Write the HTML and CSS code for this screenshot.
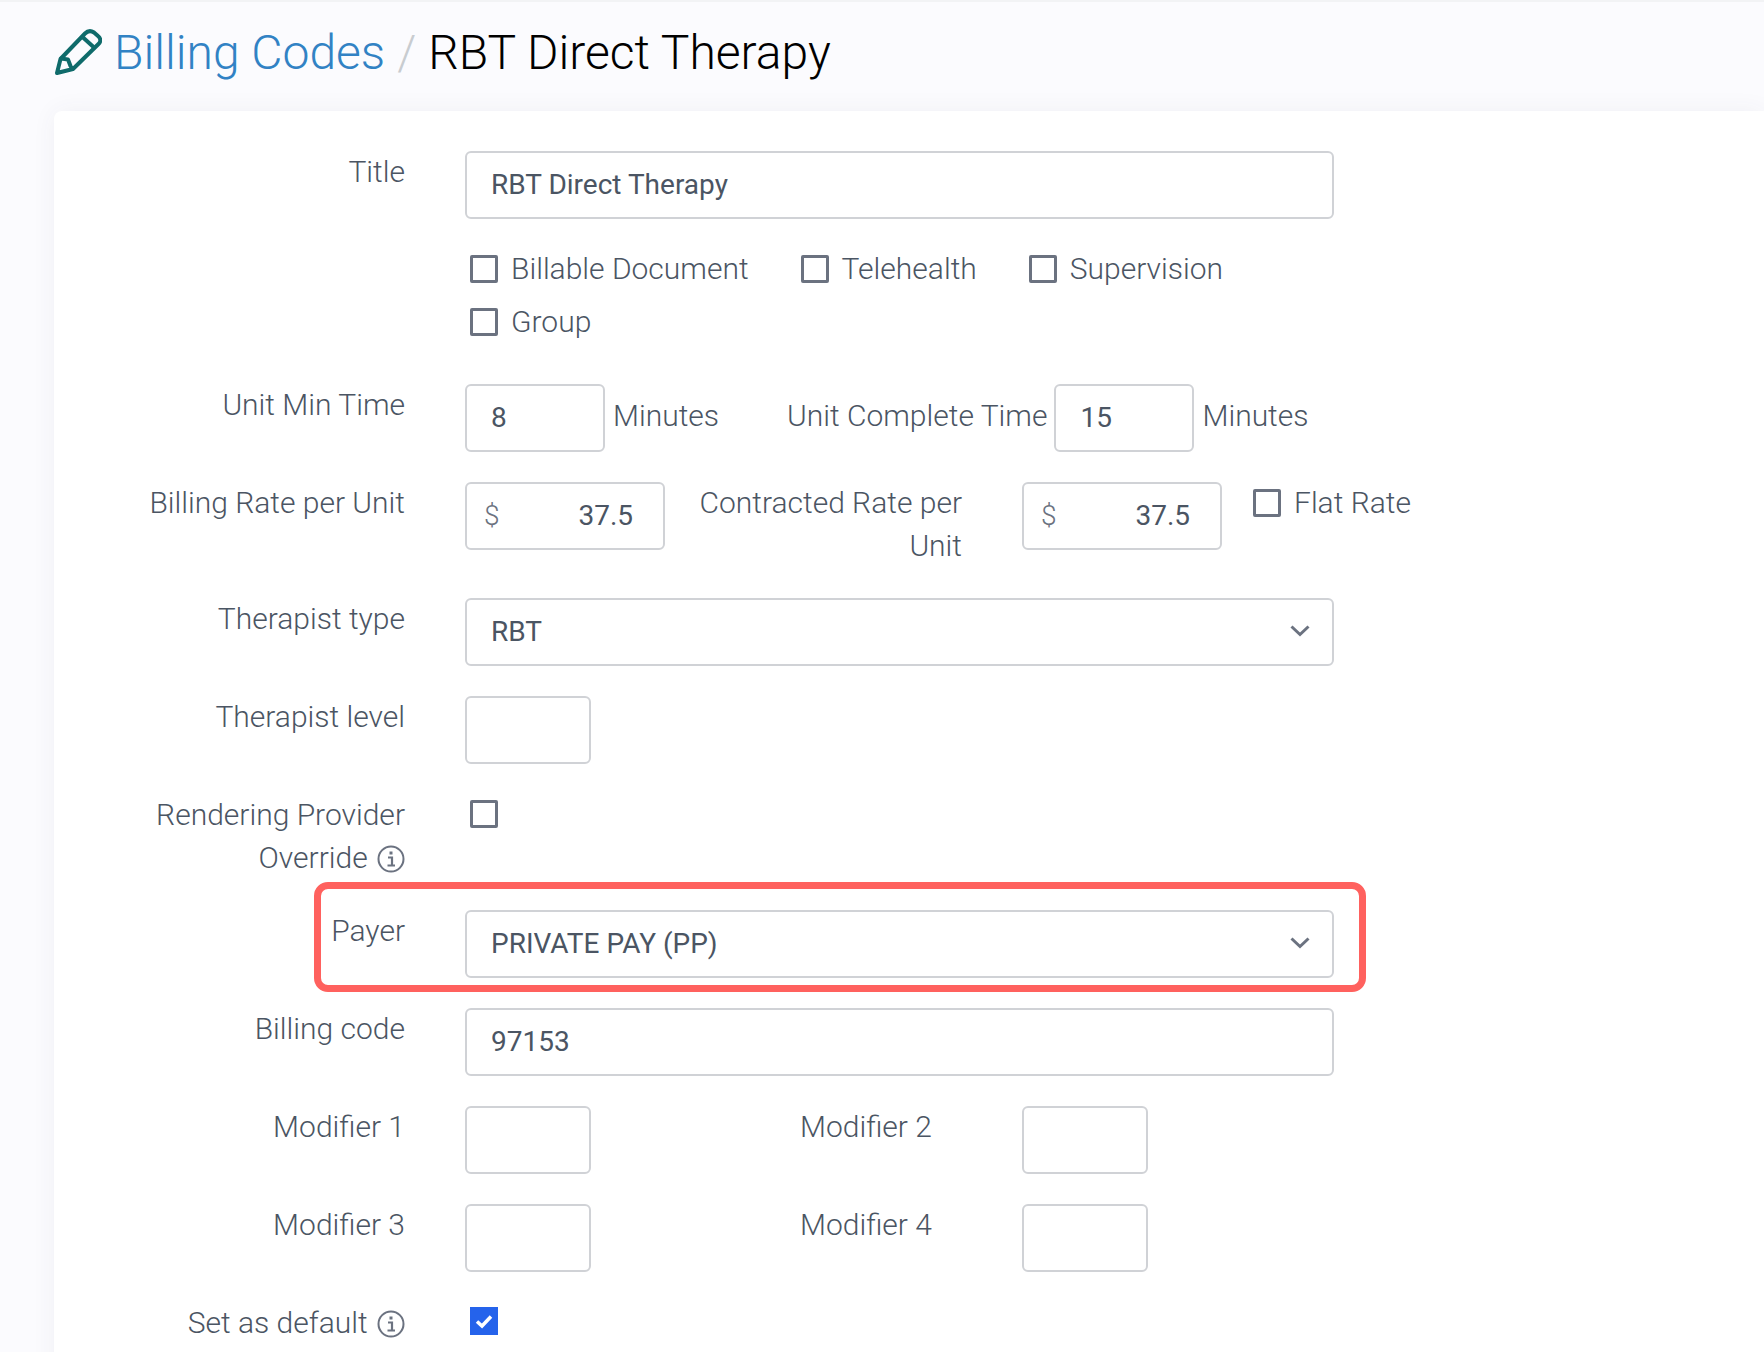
FILE: index.html
```html
<!DOCTYPE html>
<html lang="en">
<head>
<meta charset="utf-8">
<title>Billing Codes</title>
<link rel="stylesheet" href="styles.css">
</head>
<body>
<header class="page-head">
  <svg class="pencil" viewBox="0 0 48 48" width="48" height="48" fill="none" stroke="#0f6b6b" stroke-width="4" stroke-linejoin="round" stroke-linecap="round">
    <path d="M6.500 31 31 5.500C34 2.500 37 2.500 40 4.500L44 8C47 10.500 47 13.500 44.500 16L19 41 3 45Z"/>
    <path d="M28.500 9 39.500 19"/>
    <path d="M7 30.500 14 31.500 16.500 38 18.500 41"/>
  </svg>
  <h1 class="crumbs"><a class="crumb-link">Billing Codes</a><span class="crumb-sep">/</span><span class="crumb-current">RBT Direct Therapy</span></h1>
</header>
<main class="card">
  <div class="row">
    <div class="label">Title</div>
    <div class="field field-full">RBT Direct Therapy</div>
  </div>
  <div class="row row-checks">
    <div class="label"></div>
    <div class="check-group">
      <label class="check"><span class="box"></span>Billable Document</label>
      <label class="check"><span class="box"></span>Telehealth</label>
      <label class="check"><span class="box"></span>Supervision</label>
      <label class="check"><span class="box"></span>Group</label>
    </div>
  </div>
  <div class="row">
    <div class="label">Unit Min Time</div>
    <div class="field field-unit">8</div>
    <span class="suffix">Minutes</span>
    <span class="inline-label">Unit Complete Time</span>
    <div class="field field-unit">15</div>
    <span class="suffix">Minutes</span>
  </div>
  <div class="row row-rate">
    <div class="label">Billing Rate per Unit</div>
    <div class="field field-money"><span class="dollar">$</span><span>37.5</span></div>
    <div class="label-mid">Contracted Rate per Unit</div>
    <div class="field field-money"><span class="dollar">$</span><span>37.5</span></div>
    <label class="check check-flat"><span class="box"></span>Flat Rate</label>
  </div>
  <div class="row">
    <div class="label">Therapist type</div>
    <div class="field field-full field-select">RBT
      <svg class="chevron" viewBox="0 0 20 12" width="20" height="12" fill="none" stroke="#6b7280" stroke-width="3"><path d="M1.500 1.500 10 9.500l8.500-8"/></svg>
    </div>
  </div>
  <div class="row">
    <div class="label">Therapist level</div>
    <div class="field field-small"></div>
  </div>
  <div class="row row-provider">
    <div class="label">Rendering Provider Override
      <svg class="info" viewBox="0 0 28 28" width="28" height="28" fill="none" stroke="#6b7280"><circle cx="14" cy="14" r="12.500" stroke-width="2"/><path d="M11 12.500H15V20M10.500 20.500h7.500" stroke-width="2.200"/><path d="M14 6.500v3" stroke-width="3"/></svg>
    </div>
    <span class="box box-solo"></span>
  </div>
  <div class="row row-payer">
    <div class="highlight"></div>
    <div class="label">Payer</div>
    <div class="field field-full field-select">PRIVATE PAY (PP)
      <svg class="chevron" viewBox="0 0 20 12" width="20" height="12" fill="none" stroke="#6b7280" stroke-width="3"><path d="M1.500 1.500 10 9.500l8.500-8"/></svg>
    </div>
  </div>
  <div class="row">
    <div class="label">Billing code</div>
    <div class="field field-full">97153</div>
  </div>
  <div class="row">
    <div class="label">Modifier 1</div>
    <div class="field field-small"></div>
    <div class="label-mod">Modifier 2</div>
    <div class="field field-small"></div>
  </div>
  <div class="row">
    <div class="label">Modifier 3</div>
    <div class="field field-small"></div>
    <div class="label-mod">Modifier 4</div>
    <div class="field field-small"></div>
  </div>
  <div class="row row-default">
    <div class="label">Set as default
      <svg class="info" viewBox="0 0 28 28" width="28" height="28" fill="none" stroke="#6b7280"><circle cx="14" cy="14" r="12.500" stroke-width="2"/><path d="M11 12.500H15V20M10.500 20.500h7.500" stroke-width="2.200"/><path d="M14 6.500v3" stroke-width="3"/></svg>
    </div>
    <span class="box box-solo box-on">
      <svg viewBox="0 0 28 28" width="28" height="28" fill="none" stroke="#fff" stroke-width="3.500"><path d="M7 14.500 12 19l9-9.500"/></svg>
    </span>
  </div>
</main>
</body>
</html>
```

FILE: styles.css
```css
* { box-sizing: border-box; }
html, body { margin: 0; height: 1352px; overflow: hidden; }
body {
  background: #fbfbfe;
  border-top: 2px solid #f2f3f5;
  font-family: Roboto, "Liberation Sans", sans-serif;
  font-weight: 300;
  font-size: 30px;
  line-height: 43px;
  color: #4b5563;
}
.page-head {
  display: flex;
  align-items: center;
  gap: 12px;
  height: 109px;
  padding: 0 0 7px 54px;
}
.pencil { flex: none; margin-top: -2px; }
.crumbs { margin: 0; font-size: 48px; font-weight: 300; line-height: 60px; color: #000; }
.crumb-link { color: #3182c4; }
.crumb-sep { color: #c8ccd0; margin: 0 12px; }
.card {
  margin-left: 54px;
  height: 1300px;
  padding-top: 40px;
  background: #fff;
  border-radius: 8px 0 0 0;
  box-shadow: 0 0 24px rgba(60, 64, 90, .06);
}
.row { display: flex; align-items: flex-start; margin-bottom: 30px; }
.label {
  flex: none;
  width: 351px;
  margin-right: 60px;
  padding-left: 90px;
  text-align: right;
  margin-top: -1px;
}
.field {
  flex: none;
  height: 68px;
  background: #fff;
  border: 2px solid #d0d2d6;
  border-radius: 6px;
  padding: 0 24px 2px;
  display: flex;
  align-items: center;
  font-weight: 400;
  font-size: 28px;
  color: #4b5563;
}
.field-full { width: 869px; }
.field-select { justify-content: space-between; padding-right: 22px; }
.field-unit { width: 140px; }
.field-small { width: 126px; }
.field-money { width: 200px; justify-content: space-between; padding: 0 30px 2px 17px; }
.dollar { font-weight: 300; color: #6b7280; }
.suffix { margin: 10px 0 0 8px; }
.inline-label { margin: 10px 7px 0 68px; }
.label-mid { flex: none; width: 297px; margin: -1px 60px 0 0; padding-left: 25px; text-align: right; }
.label-mod { flex: none; width: 222px; margin: -1px 0 0 209px; }
.row-checks { margin-top: -7px; margin-bottom: 36px; }
.row-rate { margin-bottom: 31px; }
.check-group { flex: 0 0 869px; display: flex; flex-wrap: wrap; column-gap: 52px; padding-left: 5px; }
.check { display: flex; align-items: center; height: 53px; }
.box {
  flex: none;
  display: block;
  width: 28px;
  height: 28px;
  margin-right: 13px;
  border: 3px solid #6b7280;
  border-radius: 2px;
  background: #fff;
}
.check-flat { height: 41px; margin-left: 31px; }
.box-solo { margin: 6px 0 0 5px; }
.row-provider { margin-bottom: 31px; }
.row-payer { position: relative; }
.highlight {
  position: absolute;
  left: 260px;
  top: -28px;
  width: 1052px;
  height: 110px;
  border: 7px solid #ff615e;
  border-radius: 14px;
  pointer-events: none;
}
.info { vertical-align: -5px; margin-left: 2px; }
.row-default .box-solo { margin-top: 5px; }
.row-default .label { margin-top: -1px; }
.box-on { border: none; border-radius: 0; background: #2563eb; }
.box-on svg { display: block; }
```
